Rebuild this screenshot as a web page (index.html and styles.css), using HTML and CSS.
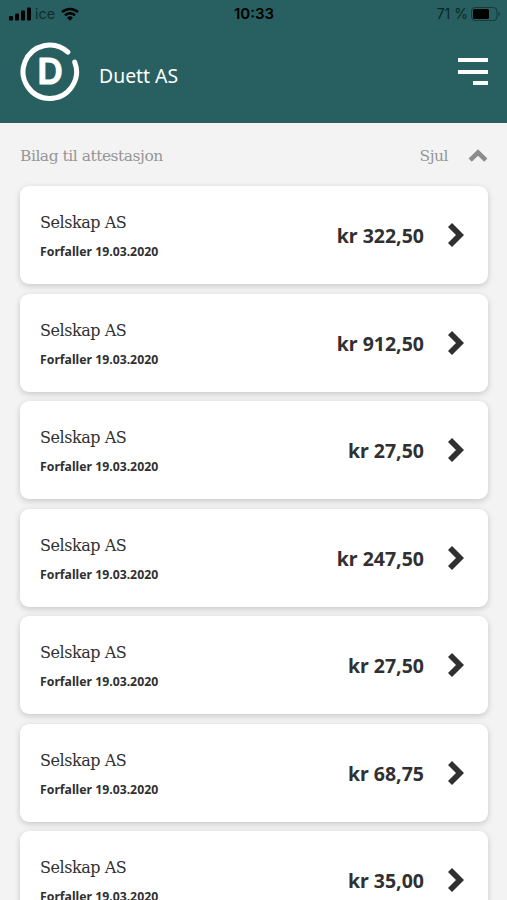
FILE: index.html
```html
<!DOCTYPE html>
<html lang="no">
<head>
    <meta charset="UTF-8">
    <meta name="viewport" content="width=device-width, initial-scale=1.0">
    <title>Duett AS</title>
    <link rel="stylesheet" href="styles.css">
</head>
<body>
    <header>
        <div class="status-bar">
            <div class="status-left">
                <svg class="signal" width="22" height="14" viewBox="0 0 22 14">
                    <rect x="0" y="9" width="4" height="4.5" rx="1"/>
                    <rect x="6" y="6.5" width="4" height="7" rx="1"/>
                    <rect x="12" y="3.5" width="4" height="10" rx="1"/>
                    <rect x="18" y="0.5" width="4" height="13" rx="1"/>
                </svg>
                <span class="carrier">ice</span>
                <svg class="wifi" width="18" height="14" viewBox="0 0 18 14">
                    <path d="M1 5.2a11.6 11.6 0 0 1 16 0M4 8.3a7.2 7.2 0 0 1 10 0" fill="none" stroke="#000" stroke-width="2.5"/>
                    <path d="M9 13.8L6.1 10.8a4.1 4.1 0 0 1 5.8 0z"/>
                </svg>
            </div>
            <div class="clock">10:33</div>
            <div class="status-right">
                <span class="percent">71 %</span>
                <svg class="battery" width="30" height="14" viewBox="0 0 30 14">
                    <rect x="0.5" y="0.5" width="25.5" height="13" rx="3.5" fill="none" stroke="#153b3c"/>
                    <rect x="2" y="2" width="16" height="10" rx="1.5"/>
                    <path d="M27.5 4.8c2 .8 2 3.6 0 4.4z" fill="#153b3c"/>
                </svg>
            </div>
        </div>
        <div class="top-bar">
            <svg class="logo" width="60" height="60" viewBox="0 0 60 60">
                <path d="M47.9 10.1A26.7 26.7 0 1 0 54.7 20.1" fill="none" stroke="#fff" stroke-width="5" stroke-linecap="round"/>
                <text class="logo-letter" x="17.5" y="42">D</text>
            </svg>
            <h1>Duett AS</h1>
            <div class="menu">
                <span></span>
                <span></span>
                <span class="short"></span>
            </div>
        </div>
    </header>

    <main>
        <div class="section-title">
            <span class="section-name">Bilag til attestasjon</span>
            <span class="toggle">Sjul</span>
            <svg width="20" height="14" viewBox="0 0 20 14">
                <path d="M2.2 11.2L10 3.500l7.800 7.700" fill="none" stroke="#8c8c8c" stroke-width="4.6"/>
            </svg>
        </div>

        <div class="list">
            <div class="card">
                <div class="info">
                    <div class="company">Selskap AS</div>
                    <div class="due">Forfaller 19.03.2020</div>
                </div>
                <div class="amount">kr 322,50</div>
                <svg class="arrow" width="16" height="26" viewBox="0 0 16 26"><path d="M2 3L12 13 2 23"/></svg>
            </div>
            <div class="card">
                <div class="info">
                    <div class="company">Selskap AS</div>
                    <div class="due">Forfaller 19.03.2020</div>
                </div>
                <div class="amount">kr 912,50</div>
                <svg class="arrow" width="16" height="26" viewBox="0 0 16 26"><path d="M2 3L12 13 2 23"/></svg>
            </div>
            <div class="card">
                <div class="info">
                    <div class="company">Selskap AS</div>
                    <div class="due">Forfaller 19.03.2020</div>
                </div>
                <div class="amount">kr 27,50</div>
                <svg class="arrow" width="16" height="26" viewBox="0 0 16 26"><path d="M2 3L12 13 2 23"/></svg>
            </div>
            <div class="card">
                <div class="info">
                    <div class="company">Selskap AS</div>
                    <div class="due">Forfaller 19.03.2020</div>
                </div>
                <div class="amount">kr 247,50</div>
                <svg class="arrow" width="16" height="26" viewBox="0 0 16 26"><path d="M2 3L12 13 2 23"/></svg>
            </div>
            <div class="card">
                <div class="info">
                    <div class="company">Selskap AS</div>
                    <div class="due">Forfaller 19.03.2020</div>
                </div>
                <div class="amount">kr 27,50</div>
                <svg class="arrow" width="16" height="26" viewBox="0 0 16 26"><path d="M2 3L12 13 2 23"/></svg>
            </div>
            <div class="card">
                <div class="info">
                    <div class="company">Selskap AS</div>
                    <div class="due">Forfaller 19.03.2020</div>
                </div>
                <div class="amount">kr 68,75</div>
                <svg class="arrow" width="16" height="26" viewBox="0 0 16 26"><path d="M2 3L12 13 2 23"/></svg>
            </div>
            <div class="card">
                <div class="info">
                    <div class="company">Selskap AS</div>
                    <div class="due">Forfaller 19.03.2020</div>
                </div>
                <div class="amount">kr 35,00</div>
                <svg class="arrow" width="16" height="26" viewBox="0 0 16 26"><path d="M2 3L12 13 2 23"/></svg>
            </div>
        </div>
    </main>
</body>
</html>
```
FILE: styles.css
```css
* {
    margin: 0;
    padding: 0;
    box-sizing: border-box;
}

body {
    height: 900px;
    overflow: hidden;
    background-color: #f3f3f3;
    color: #303030;
    font-family: "Noto Sans", sans-serif;
}

svg {
    display: block;
    flex: none;
}

header {
    height: 123px;
    background-color: #285f60;
}

.status-bar {
    display: grid;
    grid-template-columns: 1fr auto 1fr;
    align-items: center;
    height: 27px;
    padding: 0 6px 0 9px;
    font-family: Inter, sans-serif;
    font-size: 14px;
    color: #000;
}

.status-left,
.status-right {
    display: flex;
    align-items: center;
}

.carrier {
    margin: 0 6px 0 4px;
    font-size: 14.5px;
    color: #102e2f;
}

.clock {
    margin-right: 2px;
    font-weight: 600;
    font-size: 15px;
}

.status-right {
    justify-content: flex-end;
}

.percent {
    margin-right: 3px;
    color: #0c2526;
}

.top-bar {
    display: flex;
    align-items: center;
    padding: 15px 19px 0 20px;
}

.logo-letter {
    font-family: Inter, sans-serif;
    font-size: 35px;
    font-weight: 600;
    fill: #fff;
    stroke: #fff;
    stroke-width: 1.2;
    stroke-linejoin: round;
}

h1 {
    margin: 7px 0 0 19px;
    font-size: 19.4px;
    font-weight: 400;
    line-height: 28px;
    color: #fff;
}

.menu {
    display: flex;
    flex-direction: column;
    align-items: flex-end;
    gap: 7.5px;
    margin-left: auto;
    padding-bottom: 1px;
}

.menu span {
    width: 30px;
    height: 4px;
    background-color: #fff;
}

.menu .short {
    width: 15px;
}

.section-title {
    display: flex;
    align-items: center;
    height: 63.4px;
    padding: 2px 19px 0 20px;
    font-family: "Roboto Slab", "DejaVu Serif", serif;
    font-size: 15.5px;
    letter-spacing: -0.48px;
    color: #969696;
}

.toggle {
    margin-left: auto;
    margin-right: 20px;
}

.list {
    display: flex;
    flex-direction: column;
    gap: 9.7px;
    padding: 0 19px 0 20px;
}

.card {
    display: flex;
    align-items: center;
    flex: none;
    height: 97.8px;
    padding: 0 24px 0 20px;
    background-color: #fff;
    border-radius: 9px;
    box-shadow: 0 2px 6px rgba(0, 0, 0, 0.18);
}

.info {
    flex: 1;
    padding-top: 2px;
}

.company {
    font-family: "Roboto Slab", "DejaVu Serif", serif;
    font-size: 16px;
    letter-spacing: -0.45px;
    line-height: 24px;
}

.due {
    margin-top: 8px;
    font-size: 12.25px;
    font-weight: 700;
    line-height: 18px;
}

.amount {
    margin: 1px 24px 0 0;
    font-size: 19.5px;
    font-weight: 700;
}

.arrow path {
    fill: none;
    stroke: #303030;
    stroke-width: 5.7;
}
```
